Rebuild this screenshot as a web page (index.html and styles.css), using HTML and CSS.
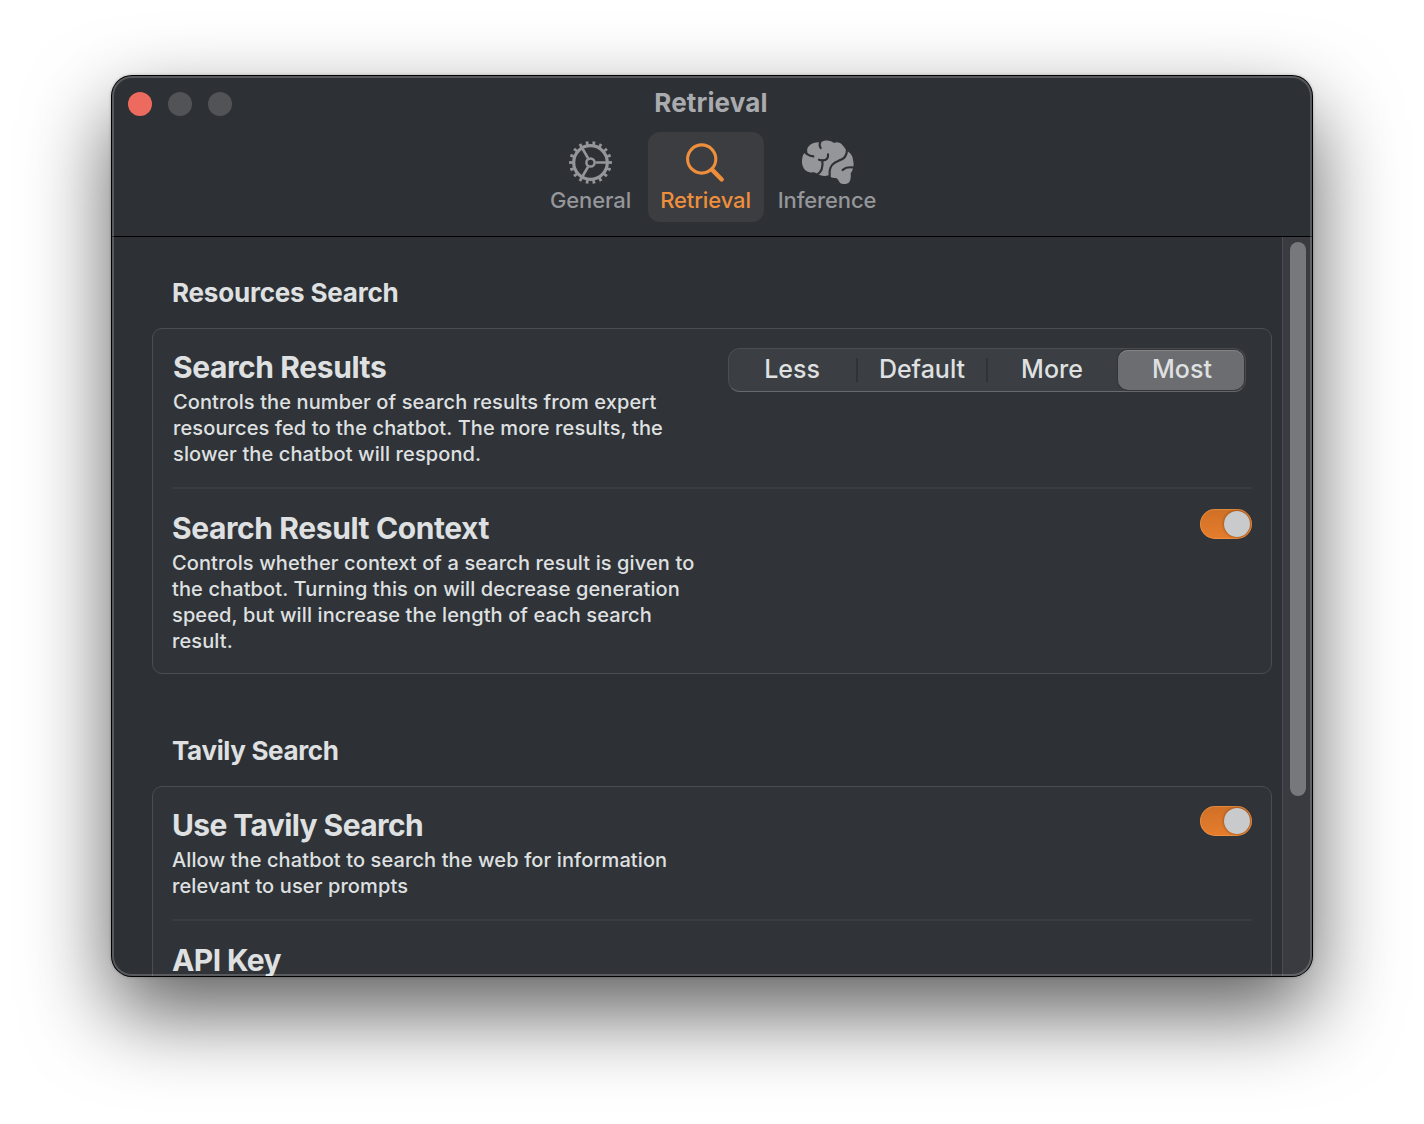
FILE: index.html
```html
<!DOCTYPE html>
<html lang="en">
<head>
<meta charset="utf-8">
<title>Retrieval</title>
<link rel="stylesheet" href="styles.css">
</head>
<body>
<main class="window">
  <header class="toolbar">
    <div class="titlebar">
      <div class="lights"><span class="light close"></span><span class="light"></span><span class="light"></span></div>
      <h1 class="window-title">Retrieval</h1>
    </div>
    <nav class="tabs">
      <button class="tab">
        <svg class="icon" width="56" height="48" viewBox="-28.5 -24.5 56 48" fill="none" stroke="currentColor">
          <circle r="16.8" stroke-width="3.2"/>
          <circle r="19.4" stroke-width="4" pathLength="180" stroke-dasharray="4 6" stroke-dashoffset="2"/>
          <circle r="4.1" stroke-width="2.5"/>
          <path stroke-width="2.7" d="M5 0H16M-2.5-4.3L-8-13.9M-2.5 4.3L-8 13.9"/>
        </svg>
        <span class="tab-label label-general">General</span>
      </button>
      <button class="tab selected">
        <svg class="icon" width="56" height="48" viewBox="678 138 56 48" fill="none" stroke="currentColor">
          <circle cx="701.7" cy="159" r="14.1" stroke-width="3.1"/>
          <path d="M712 169.600L721.700 179.500" stroke-width="4.400" stroke-linecap="round"/>
        </svg>
        <span class="tab-label label-retrieval">Retrieval</span>
      </button>
      <button class="tab wide">
        <svg class="icon" width="56" height="48" viewBox="87 39 168 144">
          <path fill="currentColor" d="M104 83C95 92 94 113 99 125C105 139 118 143 129 142C137 142 143 148 151 151C160 154 169 153 176 151C180 158 188 160 198 159C204 160 205 168 210 173C218 180 233 178 238 171C243 164 243 153 242 145C250 136 253 118 249 106C249 95 244 86 235 80C228 76 224 68 219 62C211 52 200 50 192 54C183 45 162 44 153 52C139 50 123 54 117 63C111 69 110 77 113 83Z"/>
          <g class="folds">
            <path d="M99 74C105 84 112 93 130 94"/>
            <path d="M152 48C148 56 148 63 152 69"/>
            <path d="M174 88C176 99 169 106 159 106C153 106 149 105 147 104"/>
            <path d="M157 106C159 121 156 140 141 149"/>
            <path d="M231 74C231 93 221 103 206 107C190 113 180 124 179 138V160"/>
            <path d="M254 128C238 125 225 128 218 135"/>
          </g>
        </svg>
        <span class="tab-label label-inference">Inference</span>
      </button>
    </nav>
  </header>
  <div class="body">
    <div class="content">
      <section class="section">
        <h2 class="section-title st-resources">Resources Search</h2>
        <div class="card">
          <div class="row">
            <div class="text inset">
              <h3 class="row-title rt-results">Search Results</h3>
              <p class="desc">Controls the number of search results from expert<br>resources fed to the chatbot. The more results, the<br>slower the chatbot will respond.</p>
            </div>
            <div class="segmented">
              <span class="segment">Less</span><span class="segment">Default</span><span class="segment">More</span><span class="segment active">Most</span>
            </div>
          </div>
          <div class="row second">
            <div class="text">
              <h3 class="row-title rt-context">Search Result Context</h3>
              <p class="desc">Controls whether context of a search result is given to<br>the chatbot. Turning this on will decrease generation<br>speed, but will increase the length of each search<br>result.</p>
            </div>
            <span class="toggle"><span class="knob"></span></span>
          </div>
        </div>
      </section>
      <section class="section">
        <h2 class="section-title st-tavily">Tavily Search</h2>
        <div class="card">
          <div class="row">
            <div class="text">
              <h3 class="row-title rt-tavily">Use Tavily Search</h3>
              <p class="desc">Allow the chatbot to search the web for information<br>relevant to user prompts</p>
            </div>
            <span class="toggle"><span class="knob"></span></span>
          </div>
          <div class="row second">
            <div class="text"><h3 class="row-title rt-api">API Key</h3></div>
          </div>
        </div>
      </section>
    </div>
    <div class="scrollbar"><div class="thumb"></div></div>
  </div>
</main>
</body>
</html>
```
FILE: styles.css
```css
* { box-sizing: border-box; }
body {
  margin: 0;
  height: 1124px;
  padding: 76px 112px;
  background: #fff;
  overflow: hidden;
  font-family: Inter, "Liberation Sans", sans-serif;
  color: #dfe0e1;
}
h1, h2, h3, p { margin: 0; }
.window {
  position: relative;
  width: 1200px;
  height: 900px;
  display: flex;
  flex-direction: column;
  border-radius: 20px;
  background: #2d3034;
  box-shadow: 0 0 0 1px #000, 0 0 3px 1px rgba(0,0,0,.25), 0 36px 84px rgba(0,0,0,.64);
}
/* light rim drawn over the window edge */
.window::after {
  content: "";
  position: absolute;
  inset: 0;
  border: 2px solid rgba(255,255,255,.2);
  border-radius: 20px;
  pointer-events: none;
}
.toolbar { height: 161px; border-bottom: 1px solid #000; flex: none; }
.titlebar {
  height: 56px;
  display: grid;
  grid-template-columns: 1fr auto 1fr;
  align-items: center;
}
.lights { display: flex; gap: 16px; padding-left: 16px; }
.light { width: 24px; height: 24px; border-radius: 50%; background: #515357; }
.close { background: #ec6a5e; }
.window-title {
  font-size: 26px;
  font-weight: 700;
  line-height: 52px;
  height: 54px;
  color: #a9abae;
  letter-spacing: .15px;
  padding-right: 2px;
}
.tabs { display: flex; justify-content: center; padding-right: 2px; }
.tab {
  width: 116px;
  height: 90px;
  padding: 6px 0 0;
  display: flex;
  flex-direction: column;
  align-items: center;
  border: 0;
  border-radius: 12px;
  background: none;
  color: #949699;
  font-family: inherit;
}
.wide { width: 126px; }
.selected { background: #3b3d41; color: #ef8f3c; }
.icon { display: block; }
.folds { fill: none; stroke: #2d3034; stroke-width: 6.5; stroke-linecap: round; }
.tab-label { font-size: 22px; line-height: 28px; font-weight: 450; white-space: nowrap; letter-spacing: -.12px; }
.label-general { padding-left: 1px; }
.label-retrieval { padding-right: 1px; }
.body { flex: 1; min-height: 0; display: flex; overflow: hidden; border-radius: 0 0 20px 20px; }
.content { flex: 1; padding: 32px 10px 0 40px; overflow: hidden; }
.section { margin-bottom: 53px; }
.section-title {
  font-size: 26px;
  font-weight: 650;
  line-height: 48px;
  padding-left: 20px;
  height: 59px;
  letter-spacing: -.2px;
}
.st-tavily { letter-spacing: -.35px; }
.card {
  border: 1px solid #4b4d51;
  border-radius: 10px;
  background: #303337;
  padding: 0 19px;
}
.row {
  display: flex;
  justify-content: space-between;
  align-items: flex-start;
  padding: 20px 0;
}
.second { border-top: 2px solid #3a3c40; padding: 21px 0 19px; }
.inset { padding-left: 1px; }
.row-title {
  font-size: 30px;
  font-weight: 650;
  line-height: 36px;
  margin-bottom: 4px;
  white-space: nowrap;
  letter-spacing: -.4px;
}
.rt-tavily { letter-spacing: -.6px; }
.rt-api { letter-spacing: -.6px; }
.desc { font-size: 20px; line-height: 26px; font-weight: 450; white-space: nowrap; letter-spacing: .11px; }
.segmented {
  display: flex;
  width: 518px;
  height: 44px;
  margin: -1px 6px 0 0;
  padding: 1px 0 1px 1px;
  border: 1px solid #4b4e51;
  border-bottom-color: #686b6d;
  border-radius: 12px;
  background: #3b3e42;
}
.segment {
  flex: none;
  width: 130px;
  height: 40px;
  padding-right: 6px;
  line-height: 38px;
  text-align: center;
  font-size: 25px;
  font-weight: 450;
}
.segment:nth-child(-n+2) {
  background: linear-gradient(#303236, #303236) right 2px center / 2px 24px no-repeat;
}
.segment.active {
  width: 126px;
  margin-left: -2px;
  padding: 0 0 0 2px;
  border-radius: 10px;
  background: #6c6d71;
  box-shadow: inset 0 1px #838488, 0 0 2px rgba(0,0,0,.5);
}
.toggle {
  display: flex;
  justify-content: flex-end;
  width: 52px;
  height: 30px;
  padding: 2px;
  border-radius: 15px;
  background: linear-gradient(#cf7026, #e67d2d);
  box-shadow: inset 0 0 0 1px rgba(255,180,110,.35);
  margin-top: -1px;
}
.knob { width: 26px; height: 26px; border-radius: 50%; background: #c9cacb; box-shadow: 0 0 3px rgba(0,0,0,.45); }
.scrollbar {
  flex: none;
  width: 30px;
  padding: 5px 0 0 7px;
  background: #393b40;
  border-left: 1px solid #4b4d51;
}
.thumb { width: 16px; height: 554px; border-radius: 8px; background: #77787c; }
```
